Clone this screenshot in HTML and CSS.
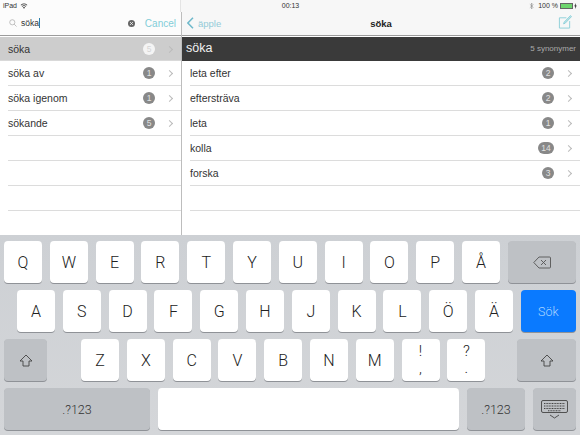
FILE: index.html
```html
<!DOCTYPE html>
<html lang="sv">
<head>
<meta charset="utf-8">
<title>söka</title>
<link rel="stylesheet" href="styles.css">
</head>
<body>
<div class="app">
  <div class="status">
    <div class="status-left">
      <span>iPad</span>
      <svg class="wifi" viewBox="0 0 10 8"><path d="M5 7.6 3.6 5.9a2 2 0 0 1 2.8 0zM2.7 5A3.4 3.4 0 0 1 7.3 5l.7-.8a4.5 4.5 0 0 0-6 0zM1.2 3.4a5.7 5.7 0 0 1 7.6 0l.7-.8a6.8 6.8 0 0 0-9 0z"/></svg>
    </div>
    <div class="status-mid">00:13</div>
    <div class="status-right">
      <svg class="bt" viewBox="0 0 6 9"><path d="M1 2.4 5 6 3 8V1l2 2-4 3.6" fill="none" stroke="#888" stroke-width=".7"/></svg>
      <span>100 %</span>
      <span class="battery"><span class="battery-fill"></span></span>
      <svg class="bolt" viewBox="0 0 4 8"><path d="M2.4 0 .4 4.4h1.3L1.4 8l2.2-4.6H2.2z"/></svg>
    </div>
  </div>
  <div class="panes">
    <aside class="side">
      <div class="search">
        <svg class="glass" viewBox="0 0 9 9"><circle cx="3.7" cy="3.7" r="2.9"/><path d="m5.8 5.8 2.7 2.7"/></svg>
        <span class="query">söka</span><span class="caret"></span>
        <span class="clear"><svg viewBox="0 0 8 8"><path d="m2.4 2.4 3.2 3.2m0-3.2L2.4 5.6"/></svg></span>
        <span class="cancel">Cancel</span>
      </div>
      <ul class="list list-side">
        <li class="row row-on"><span class="label">söka</span><span class="badge">5</span><i class="chev"></i></li>
        <li class="row"><span class="label">söka av</span><span class="badge">1</span><i class="chev"></i></li>
        <li class="row"><span class="label">söka igenom</span><span class="badge">1</span><i class="chev"></i></li>
        <li class="row"><span class="label">sökande</span><span class="badge">5</span><i class="chev"></i></li>
        <li class="row"></li>
        <li class="row"></li>
        <li class="row"></li>
      </ul>
    </aside>
    <main class="main">
      <div class="nav">
        <div class="back">
          <svg viewBox="0 0 7 12"><path d="M6 .8.9 6 6 11.2"/></svg>
          <span>äpple</span>
        </div>
        <div class="title">söka</div>
        <svg class="compose" viewBox="0 0 15 15"><path d="M9 3H1.500v11h11V6.500"/><path d="m6 9.500.6-1.800L13.400.6l1.100 1.100-6.800 7.100z" class="compose-pen"/></svg>
      </div>
      <div class="head"><span class="head-word">söka</span><span class="head-count">5 synonymer</span></div>
      <ul class="list list-main">
        <li class="row"><span class="label">leta efter</span><span class="badge">2</span><i class="chev"></i></li>
        <li class="row"><span class="label">eftersträva</span><span class="badge">2</span><i class="chev"></i></li>
        <li class="row"><span class="label">leta</span><span class="badge">1</span><i class="chev"></i></li>
        <li class="row"><span class="label">kolla</span><span class="badge badge-wide">14</span><i class="chev"></i></li>
        <li class="row"><span class="label">forska</span><span class="badge">3</span><i class="chev"></i></li>
        <li class="row"></li>
      </ul>
    </main>
  </div>
  <div class="keyboard">
    <div class="kb-row">
      <span class="key">Q</span><span class="key">W</span><span class="key">E</span><span class="key">R</span><span class="key">T</span><span class="key">Y</span><span class="key">U</span><span class="key">I</span><span class="key">O</span><span class="key">P</span><span class="key">Å</span>
      <span class="key key-fn key-grow">
        <svg class="ico-del" viewBox="0 0 18 13"><path d="M6 1h10.500a1 1 0 0 1 1 1v9a1 1 0 0 1-1 1H6L.8 6.500z"/><path d="m8 4 5 5m0-5-5 5"/></svg>
      </span>
    </div>
    <div class="kb-row kb-row-2">
      <span class="key">A</span><span class="key">S</span><span class="key">D</span><span class="key">F</span><span class="key">G</span><span class="key">H</span><span class="key">J</span><span class="key">K</span><span class="key">L</span><span class="key">Ö</span><span class="key">Ä</span>
      <span class="key key-go key-grow">Sök</span>
    </div>
    <div class="kb-row">
      <span class="key key-fn key-shift-l"><svg class="ico-shift" viewBox="0 0 14 13"><path d="M7 1 1 7h3v5h6V7h3z"/></svg></span>
      <span class="key">Z</span><span class="key">X</span><span class="key">C</span><span class="key">V</span><span class="key">B</span><span class="key">N</span><span class="key">M</span>
      <span class="key key-two"><span>!</span><span>,</span></span>
      <span class="key key-two"><span>?</span><span>.</span></span>
      <span class="key key-fn key-shift-r"><svg class="ico-shift" viewBox="0 0 14 13"><path d="M7 1 1 7h3v5h6V7h3z"/></svg></span>
    </div>
    <div class="kb-row kb-row-4">
      <span class="key key-fn key-num key-num-l">.?123</span>
      <span class="key key-grow"></span>
      <span class="key key-fn key-num key-num-r">.?123</span>
      <span class="key key-fn key-hide">
        <svg class="ico-kbd" viewBox="0 0 27 19">
          <rect x=".5" y=".5" width="26" height="12" rx="1.500"/>
          <path class="kbd-keys" d="M3 3.500h21M3 6h21M3 8.500h21M7 10.700h13"/>
          <path class="kbd-down" d="m9 15 4.500 3 4.500-3"/>
        </svg>
      </span>
    </div>
  </div>
</div>
</body>
</html>
```
FILE: styles.css
```css
* { box-sizing: border-box; }
html, body { margin: 0; padding: 0; }
body { font-family: "Liberation Sans", Arial, sans-serif; background: #fff; color: #333; }
.app { width: 580px; height: 435px; overflow: hidden; display: flex; flex-direction: column; }
ul { list-style: none; margin: 0; padding: 0; }

.status { display: grid; grid-template-columns: 181px 1fr 181px; height: 12px; font-size: 7px; line-height: 12px; color: #333; background: #f7f7f7; }
.status-left { display: flex; align-items: center; gap: 3px; padding-left: 3px; background: #fcfcfc; border-right: 1px solid #e4e4e4; }
.wifi { width: 8px; height: 6px; fill: #333; }
.status-mid { text-align: center; padding-left: 1px; }
.status-right { display: flex; align-items: center; justify-content: flex-end; gap: 2px; padding-right: 3px; }
.bt { width: 5px; height: 8px; margin-right: 2px; }
.battery { width: 13px; height: 6px; border: 1px solid #666; padding: 0; display: block; }
.battery-fill { display: block; height: 100%; background: #6fd66f; }
.bolt { width: 3px; height: 6px; fill: #222; margin-left: -1px; }

.panes { display: flex; height: 223px; }
.side { width: 181px; display: flex; flex-direction: column; }
.main { flex: 1; display: flex; flex-direction: column; border-left: 1px solid #bdbdbd; }

.search { height: 24px; display: flex; align-items: center; padding: 0 5px 1px 9px; background: #fcfcfc; border-bottom: 1px solid #9c9c9c; }
.glass { width: 8px; height: 8px; fill: none; stroke: #aaa; stroke-width: .8; margin-right: 4px; }
.query { font-size: 8.500px; color: #333; }
.caret { width: 1px; height: 10px; background: #2c7ea8; }
.clear { width: 7px; height: 7px; border-radius: 50%; background: #666; margin-left: auto; display: block; }
.clear svg { display: block; width: 7px; height: 7px; fill: none; stroke: #eee; stroke-width: 1; }
.cancel { font-size: 10px; color: #83cdd8; margin-left: 10px; }

.list { flex: 1; background: #fff; }
.row { height: 25px; display: flex; align-items: center; position: relative; padding-bottom: 1px; }
.row::after { content: ""; position: absolute; left: 8px; right: 0; bottom: 0; height: 1px; background: #dcdcdc; }
.row-on { background: #cdcdcd; padding-bottom: 0; }
.row-on::after { left: 0; background: #d9d9d9; }
.label { font-size: 10.500px; color: #333; padding-left: 8px; flex: 1; }
.badge { min-width: 12px; height: 12px; padding: 0 2px; border-radius: 6px; background: #888; color: #e2e2e2; font-size: 8.500px; line-height: 12px; text-align: center; }
.badge-wide { width: 16px; }
.row-on .badge { background: #f4f4f4; color: #d4d4d4; }
.chev { width: 5px; height: 5px; border-top: 1px solid #bbb; border-right: 1px solid #bbb; transform: rotate(45deg); margin: 0 9px 0 12px; }

.nav { height: 24px; display: flex; align-items: center; background: #f7f7f7; border-bottom: 1px solid #9c9c9c; padding: 0 8px 1px 5px; position: relative; }
.back { display: flex; align-items: center; gap: 4px; font-size: 9.500px; color: #93cbd8; }
.back svg { width: 7px; height: 12px; fill: none; stroke: #6fb9cb; stroke-width: 1.500; }
.title { position: absolute; left: 0; right: 0; text-align: center; font-size: 9.500px; font-weight: bold; color: #222; }
.compose { width: 14px; height: 14px; margin-left: auto; fill: none; stroke: #8ccfd8; stroke-width: 1; position: relative; top: -1px; }
.compose-pen { fill: #bfe6ea; }

.head { height: 24px; background: #3a3a3a; display: flex; align-items: center; justify-content: space-between; padding: 0 4px 2px; margin-top: 1px; }
.head-word { font-size: 12.500px; color: #f2f2f2; }
.head-count { font-size: 8px; color: #aaa; font-weight: normal; }
.list-side .row:first-child { margin-top: 1px; height: 24px; }

.keyboard { flex: 1; display: flex; flex-direction: column; gap: 7px; padding-top: 6px; background: linear-gradient(#cdd0d4, #d4d6d9); }
.kb-row { height: 42px; display: flex; gap: 7.800px; padding: 0 4px; }
.kb-row-2 { padding-left: 17px; }
.kb-row-4 { gap: 8px; }
.key { width: 38px; height: 42px; flex: none; display: flex; align-items: center; justify-content: center; background: #fff; border-radius: 4px; box-shadow: 0 1px 0 #8f9297; font-family: Roboto, "Liberation Sans", sans-serif; font-weight: 300; font-size: 16px; color: #222; }
.key-fn { background: #bec1c5; }
.key-grow { flex: 1; width: auto; }
.key-go { background: #0a7aff; color: #a8d4ff; font-size: 12.500px; }
.key-shift-l { width: 43px; margin-right: 26.200px; }
.key-shift-r { width: 59px; margin-left: auto; }
.key-two { flex-direction: column; font-size: 15px; }
.key-two span { display: block; line-height: 17px; }
.key-num { font-size: 12.500px; color: #333; }
.key-num-l { width: 146px; }
.key-num-r { width: 58px; }
.key-hide { width: 43px; }
.ico-del { width: 18px; height: 13px; fill: none; stroke: #555; stroke-width: .9; }
.ico-shift { width: 14px; height: 13px; fill: none; stroke: #444; stroke-width: .9; }
.ico-kbd { width: 27px; height: 19px; fill: none; stroke: #444; stroke-width: .9; }
.kbd-keys { stroke-dasharray: 1 .6; stroke-width: 1.100; }
```
